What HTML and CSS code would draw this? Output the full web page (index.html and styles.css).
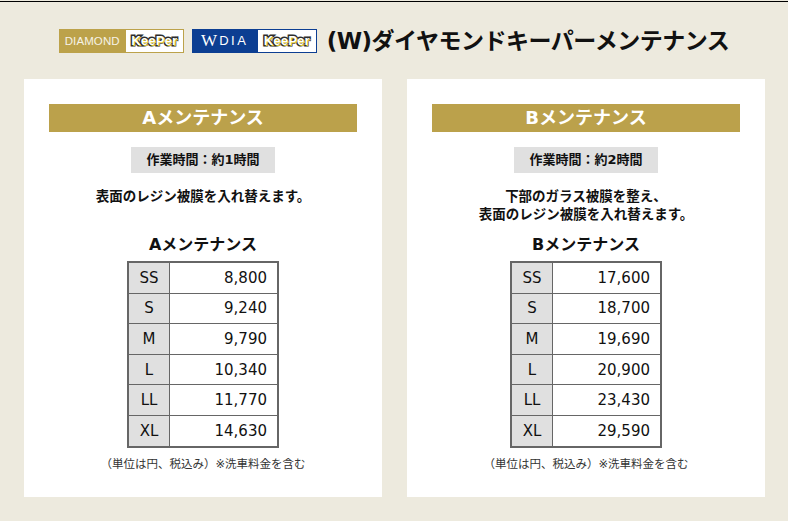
FILE: index.html
```html
<!DOCTYPE html>
<html lang="ja">
<head>
<meta charset="utf-8">
<title>(W)ダイヤモンドキーパーメンテナンス</title>
<link rel="stylesheet" href="styles.css">
</head>
<body>
<div class="topline"></div>
<header class="header">
  <div class="logo logo-diamond">
    <span class="logo-left">DIAMOND</span>
    <span class="logo-right"><span class="keeper">KeePer</span></span>
  </div>
  <div class="logo logo-wdia">
    <span class="logo-left"><span class="w">W</span><span class="dia">DIA</span></span>
    <span class="logo-right"><span class="keeper">KeePer</span></span>
  </div>
  <h1 class="title">(W)ダイヤモンドキーパーメンテナンス</h1>
</header>
<main class="panels">
  <section class="panel">
    <h2 class="panel-head">Aメンテナンス</h2>
    <div class="badge-wrap"><span class="badge">作業時間：約1時間</span></div>
    <p class="desc">表面のレジン被膜を入れ替えます。</p>
    <h3 class="table-title">Aメンテナンス</h3>
    <table class="price">
      <tr><td class="size">SS</td><td class="val">8,800</td></tr>
      <tr><td class="size">S</td><td class="val">9,240</td></tr>
      <tr><td class="size">M</td><td class="val">9,790</td></tr>
      <tr><td class="size">L</td><td class="val">10,340</td></tr>
      <tr><td class="size">LL</td><td class="val">11,770</td></tr>
      <tr><td class="size">XL</td><td class="val">14,630</td></tr>
    </table>
    <p class="note">（単位は円、税込み）※洗車料金を含む</p>
  </section>
  <section class="panel">
    <h2 class="panel-head">Bメンテナンス</h2>
    <div class="badge-wrap"><span class="badge">作業時間：約2時間</span></div>
    <p class="desc">下部のガラス被膜を整え、<br>表面のレジン被膜を入れ替えます。</p>
    <h3 class="table-title">Bメンテナンス</h3>
    <table class="price">
      <tr><td class="size">SS</td><td class="val">17,600</td></tr>
      <tr><td class="size">S</td><td class="val">18,700</td></tr>
      <tr><td class="size">M</td><td class="val">19,690</td></tr>
      <tr><td class="size">L</td><td class="val">20,900</td></tr>
      <tr><td class="size">LL</td><td class="val">23,430</td></tr>
      <tr><td class="size">XL</td><td class="val">29,590</td></tr>
    </table>
    <p class="note">（単位は円、税込み）※洗車料金を含む</p>
  </section>
</main>
</body>
</html>
```

FILE: styles.css
```css
* { box-sizing: border-box; }
html, body {
  margin: 0;
  padding: 0;
}
body {
  background: #edeade;
  font-family: "DejaVu Sans", "Noto Sans CJK JP", sans-serif;
  color: #111;
  width: 788px;
  height: 521px;
  overflow: hidden;
}
.topline {
  margin-top: 1px;
  height: 1px;
  background: #000;
}
.header {
  height: 77px;
  display: flex;
  align-items: center;
  justify-content: center;
}
.logo {
  display: flex;
  width: 125px;
  height: 24px;
  margin-right: 8px;
}
.logo-diamond .logo-left {
  width: 67px;
  background: #bca24a;
  color: #f6f2e6;
  font-family: "Liberation Sans", sans-serif;
  font-size: 11.5px;
  letter-spacing: 0.1px;
  display: flex;
  align-items: center;
  justify-content: center;
}
.logo-right {
  flex: 1;
  background: #fff;
  display: flex;
  align-items: center;
  justify-content: center;
}
.logo-diamond .logo-right { border: 1px solid #bca24a; border-left: none; }
.logo-wdia { margin-right: 10px; }
.logo-wdia .logo-left {
  width: 66px;
  background: #0c3e92;
  color: #fff;
  display: flex;
  align-items: center;
  justify-content: center;
  gap: 2px;
}
.logo-wdia .logo-right { border: 1px solid #0c3e92; border-left: none; }
.w {
  font-family: "Liberation Serif", serif;
  font-size: 17px;
  line-height: 1;
}
.dia {
  font-family: "Liberation Sans", sans-serif;
  font-size: 13px;
  letter-spacing: 2.5px;
  line-height: 1;
}
.keeper {
  font-family: "Liberation Sans", sans-serif;
  font-weight: bold;
  font-size: 13px;
  letter-spacing: 0.2px;
  color: #fff;
  -webkit-text-stroke: 3px #2e2e2e;
  paint-order: stroke fill;
  text-shadow: 1px 1px 0 #e0c830;
  line-height: 1;
}
.title {
  margin: 0;
  font-size: 23px;
  font-weight: bold;
  line-height: 30px;
  color: #111;
  letter-spacing: -0.5px;
}
.panels {
  display: flex;
  gap: 25px;
  padding: 0 23px 0 24px;
}
.panel {
  width: 358px;
  height: 418px;
  background: #fff;
  padding: 25px 25px 25px;
  text-align: center;
}
.panel-head {
  margin: 0;
  height: 28px;
  line-height: 28px;
  background: #bba14b;
  color: #fff;
  font-size: 18px;
  font-weight: bold;
}
.badge-wrap {
  margin-top: 15px;
}
.badge {
  display: inline-block;
  height: 26px;
  line-height: 26px;
  padding: 0 15px;
  background: #e0e0e0;
  font-size: 13px;
  font-weight: bold;
}
.desc {
  margin: 14px 0 0;
  min-height: 36px;
  line-height: 18px;
  font-size: 13.5px;
  font-weight: bold;
}
.table-title {
  margin: 11px 0 5px;
  font-size: 16px;
  line-height: 22px;
  font-weight: bold;
}
.price {
  margin: 0 auto;
  border-collapse: separate;
  border-spacing: 0;
  border: 2px solid #666;
  width: 152px;
}
.price td {
  height: 30.6px;
  padding: 0;
  font-size: 15px;
  color: #111;
  border-bottom: 1px solid #666;
}
.price tr:last-child td { border-bottom: none; height: 29.6px; }
.price .size {
  width: 41px;
  background: #e0e0e0;
  border-right: 1px solid #666;
  text-align: center;
}
.price .val {
  text-align: right;
  padding-right: 10px;
}
.note {
  margin: 8px 0 0;
  font-size: 11.5px;
  line-height: 16px;
  color: #333;
}
```
